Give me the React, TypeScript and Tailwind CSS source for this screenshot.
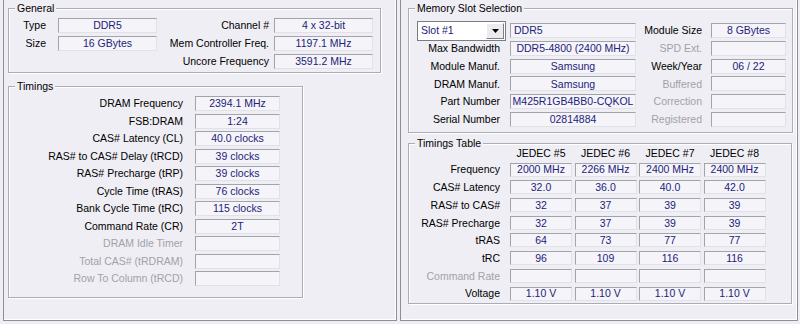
import React from "react";

const boxBase =
  "border border-t-[#a3a3aa] border-l-[#a3a3aa] border-b-[#e2e1e8] border-r-[#e2e1e8] bg-[#f5f4f9] flex items-center justify-center text-[#22227a] leading-none whitespace-nowrap overflow-hidden";

function Box({ v, w, left }: { v?: string; w: string; left?: boolean }) {
  return (
    <div className={`${boxBase} h-[15px] ${w} ${left ? "justify-start pl-[3px]" : ""}`}>
      {v}
    </div>
  );
}

function Label({ t, w, dim }: { t: string; w: string; dim?: boolean }) {
  return (
    <div
      className={`${w} text-right whitespace-nowrap leading-none ${
        dim ? "text-[#a2a2a8]" : "text-black"
      }`}
    >
      {t}
    </div>
  );
}

function Group({
  title,
  className,
  children,
}: {
  title: string;
  className: string;
  children: React.ReactNode;
}) {
  return (
    <div
      className={`relative border border-[#acacb4] shadow-[inset_1px_1px_0_#ffffff,1px_1px_0_#ffffff] ${className}`}
    >
      <div className="absolute left-[6px] top-[-8px] px-[2px] bg-[#efeef4] leading-[14px] text-black">
        {title}
      </div>
      {children}
    </div>
  );
}

const timings: [string, string, boolean][] = [
  ["DRAM Frequency", "2394.1 MHz", false],
  ["FSB:DRAM", "1:24", false],
  ["CAS# Latency (CL)", "40.0 clocks", false],
  ["RAS# to CAS# Delay (tRCD)", "39 clocks", false],
  ["RAS# Precharge (tRP)", "39 clocks", false],
  ["Cycle Time (tRAS)", "76 clocks", false],
  ["Bank Cycle Time (tRC)", "115 clocks", false],
  ["Command Rate (CR)", "2T", false],
  ["DRAM Idle Timer", "", true],
  ["Total CAS# (tRDRAM)", "", true],
  ["Row To Column (tRCD)", "", true],
];

const slotRows: [string, string, string, string, boolean][] = [
  ["Max Bandwidth", "DDR5-4800 (2400 MHz)", "SPD Ext.", "", true],
  ["Module Manuf.", "Samsung", "Week/Year", "06 / 22", false],
  ["DRAM Manuf.", "Samsung", "Buffered", "", true],
  ["Part Number", "M425R1GB4BB0-CQKOL", "Correction", "", true],
  ["Serial Number", "02814884", "Registered", "", true],
];

const table: [string, string[], boolean][] = [
  ["Frequency", ["2000 MHz", "2266 MHz", "2400 MHz", "2400 MHz"], false],
  ["CAS# Latency", ["32.0", "36.0", "40.0", "42.0"], false],
  ["RAS# to CAS#", ["32", "37", "39", "39"], false],
  ["RAS# Precharge", ["32", "37", "39", "39"], false],
  ["tRAS", ["64", "73", "77", "77"], false],
  ["tRC", ["96", "109", "116", "116"], false],
  ["Command Rate", ["", "", "", ""], true],
  ["Voltage", ["1.10 V", "1.10 V", "1.10 V", "1.10 V"], false],
];

export default function App() {
  return (
    <div className="w-[800px] h-[324px] bg-[#efeef4] flex font-['Liberation_Sans',Arial,sans-serif] text-[10.5px] overflow-hidden">
      {/* Left window */}
      <div className="w-[400px] pl-[3px]">
        <div className="w-[394px] h-[321px] border-l border-r border-b border-[#8e8e94] shadow-[inset_-1px_-1px_0_#ffffff] pl-[4px] pt-[8px] flex flex-col">
          <Group title="General" className="w-[373px] h-[65px] pt-[9px] pr-[7px] flex flex-col gap-[3px]">
            <div className="flex items-center">
              <Label t="Type" w="w-[37px]" />
              <div className="ml-[12px]"><Box v="DDR5" w="w-[99px]" /></div>
              <Label t="Channel #" w="flex-1" />
              <div className="ml-[5px]"><Box v="4 x 32-bit" w="w-[99px]" /></div>
            </div>
            <div className="flex items-center">
              <Label t="Size" w="w-[37px]" />
              <div className="ml-[12px]"><Box v="16 GBytes" w="w-[99px]" /></div>
              <Label t="Mem Controller Freq." w="flex-1" />
              <div className="ml-[5px]"><Box v="1197.1 MHz" w="w-[99px]" /></div>
            </div>
            <div className="flex items-center">
              <div className="w-[148px]" />
              <Label t="Uncore Frequency" w="flex-1" />
              <div className="ml-[5px]"><Box v="3591.2 MHz" w="w-[99px]" /></div>
            </div>
          </Group>
          <Group title="Timings" className="mt-[13px] w-[295px] h-[212px] pt-[9px] flex flex-col gap-[2.5px]">
            {timings.map(([l, v, dim]) => (
              <div key={l} className="flex items-center">
                <Label t={l} w="w-[174px]" dim={dim} />
                <div className="ml-[12px]"><Box v={v} w="w-[85px]" /></div>
              </div>
            ))}
          </Group>
        </div>
      </div>

      {/* Right window */}
      <div className="w-[400px]">
        <div className="w-[398px] h-[321px] border-l border-r border-b border-[#8e8e94] shadow-[inset_-1px_-1px_0_#ffffff] pl-[7px] pt-[8px] flex flex-col">
          <Group title="Memory Slot Selection" className="w-[385px] h-[125px] pt-[14px] pr-[6px] flex flex-col gap-[2.8px]">
            <div className="flex items-center h-[15px]">
              <div className="ml-[8px] w-[89px] h-[20px] border border-[#7c7c84] bg-white flex items-stretch">
                <div className="flex-1 flex items-center pl-[3px] text-[#22227a] leading-none">Slot #1</div>
                <div className="w-[18px] m-[1px] border border-t-[#ffffff] border-l-[#ffffff] border-b-[#808080] border-r-[#808080] bg-[#ecebf0] flex items-center justify-center">
                  <svg width="7" height="4" viewBox="0 0 7 4"><path d="M0 0H7L3.5 4Z" fill="#000" /></svg>
                </div>
              </div>
              <div className="ml-[4px]"><Box v="DDR5" w="w-[126px]" left /></div>
              <Label t="Module Size" w="flex-1" />
              <div className="ml-[9px]"><Box v="8 GBytes" w="w-[75px]" /></div>
            </div>
            {slotRows.map(([l, v, r, rv, rdim]) => (
              <div key={l} className="flex items-center">
                <Label t={l} w="w-[91px]" />
                <div className="ml-[10px]"><Box v={v} w="w-[126px]" /></div>
                <Label t={r} w="flex-1" dim={rdim} />
                <div className="ml-[9px]"><Box v={rv} w="w-[75px]" /></div>
              </div>
            ))}
          </Group>
          <Group title="Timings Table" className="mt-[10px] w-[384px] h-[161px] pt-[3px] flex flex-col gap-[3.7px]">
            <div className="flex items-center h-[12px]">
              <div className="w-[101px]" />
              <div className="flex gap-[2.5px]">
                {["JEDEC #5", "JEDEC #6", "JEDEC #7", "JEDEC #8"].map((h) => (
                  <div key={h} className="w-[62px] text-center leading-none text-black whitespace-nowrap">{h}</div>
                ))}
              </div>
            </div>
            {table.map(([l, vals, dim]) => (
              <div key={l} className="flex items-center h-[14px]">
                <Label t={l} w="w-[91px]" dim={dim} />
                <div className="ml-[10px] flex gap-[2.5px]">
                  {vals.map((v, i) => (
                    <div key={i} className={`${boxBase} w-[62px] h-[14px]`}>{v}</div>
                  ))}
                </div>
              </div>
            ))}
          </Group>
        </div>
      </div>
    </div>
  );
}
